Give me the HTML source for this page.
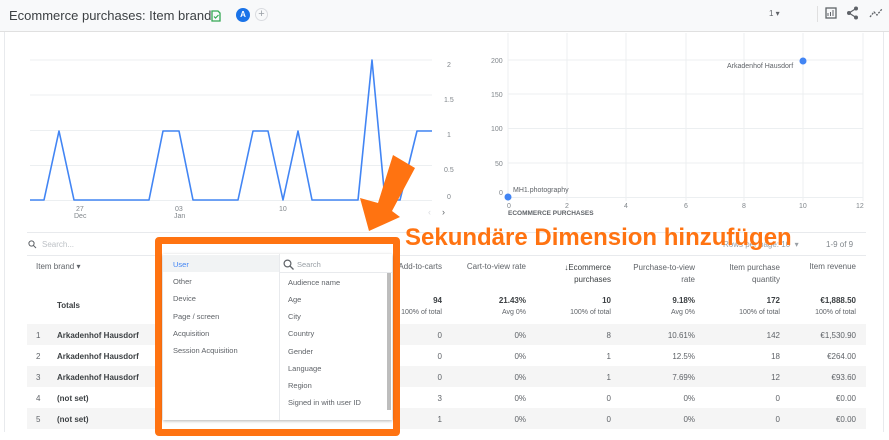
<!DOCTYPE html>
<html><head><meta charset="utf-8"><style>
*{margin:0;padding:0;box-sizing:border-box}
body{width:889px;height:440px;overflow:hidden;background:#fff;font-family:"Liberation Sans",Arial,sans-serif;position:relative;color:#3c4043}
.a{position:absolute;white-space:nowrap}
.hdr{position:absolute;left:0;top:0;width:889px;height:32px;background:#f8f9fa;border-bottom:1px solid #e0e0e0}
.s{font-size:8px;color:#5f6368}
.r{text-align:right}
.row{position:absolute;left:27px;width:839px;height:21px}
.c{position:absolute;font-size:8px;color:#5f6368;text-align:right;top:7px}
.b{font-size:8px;font-weight:bold;color:#3c4043}
.mi{position:absolute;font-size:7.5px;color:#5f6368}
</style></head><body>
<div class="hdr"></div>
<div class="a" style="left:9px;top:8px;font-size:13px;color:#3c4043">Ecommerce purchases: Item brand</div>
<svg class="a" style="left:211px;top:10px" width="10" height="12" viewBox="0 0 10 12"><path d="M1 1h6l2 2v8H1z" fill="none" stroke="#34a853" stroke-width="1.3"/><path d="M3 6.5l1.5 1.5 3-3" fill="none" stroke="#34a853" stroke-width="1.2"/></svg>
<div class="a" style="left:236px;top:8px;width:14px;height:14px;border-radius:50%;background:#1a73e8;color:#fff;font-size:8px;font-weight:bold;text-align:center;line-height:14px">A</div>
<div class="a" style="left:255px;top:8px;width:13px;height:13px;border-radius:50%;border:1px solid #dadce0;color:#9aa0a6;font-size:11px;text-align:center;line-height:11px">+</div>
<div class="a s" style="left:769px;top:9px">1 ▾</div>
<div class="a" style="left:817px;top:6px;width:1px;height:16px;background:#e0e0e0"></div>
<svg class="a" style="left:825px;top:7px" width="12" height="12"><rect x="1" y="1" width="10" height="10" fill="none" stroke="#5f6368" stroke-width="1.3"/><path d="M3 9V6M5.5 9V5M8 9V3" stroke="#5f6368"/></svg>
<svg class="a" style="left:846px;top:6px" width="13" height="14"><circle cx="10" cy="2.5" r="2" fill="#5f6368"/><circle cx="3" cy="7" r="2" fill="#5f6368"/><circle cx="10" cy="11.5" r="2" fill="#5f6368"/><path d="M10 2.5L3 7l7 4.5" stroke="#5f6368" fill="none" stroke-width="1.2"/></svg>
<svg class="a" style="left:869px;top:7px" width="14" height="12"><path d="M1 10l4-5 3 3 5-6" stroke="#5f6368" fill="none" stroke-width="1.3" stroke-dasharray="2 1.2"/></svg>
<div class="a" style="left:4px;top:32px;width:1px;height:400px;background:#e8eaed"></div>
<div class="a" style="left:883px;top:32px;width:1px;height:400px;background:#e8eaed"></div>

<svg class="a" style="left:0;top:32px" width="889" height="190" viewBox="0 32 889 190">
<g stroke="#eceff1" stroke-width="1">
<path d="M30 60H432M30 95H432M30 130.5H432M30 165.5H432M30 200.5H432"/>
<path d="M508 33V201M567 33V201M626 33V201M686 33V201M744 33V201M803 33V201M863 33V201"/>
<path d="M508 60H863M508 94H863M508 128.5H863M508 163H863M508 197.5H863"/>
</g>
<path d="M30 200H44L59 131L74 200H149L163 131H179L193 200H238L253 131H268L283 200L298 131L312 200H358L372 60L385 200H400L417 131H432" fill="none" stroke="#4285f4" stroke-width="1.6" stroke-linejoin="round"/>
<g font-family="Liberation Sans,Arial" font-size="7" fill="#80868b">
<text x="447" y="67">2</text><text x="444" y="102">1.5</text><text x="447" y="137">1</text><text x="444" y="172">0.5</text><text x="447" y="199">0</text>
<text x="76" y="211">27</text><text x="74" y="218">Dec</text><text x="175" y="211">03</text><text x="174" y="218">Jan</text><text x="279" y="211">10</text>
<text x="491" y="63">200</text><text x="491" y="97">150</text><text x="491" y="131">100</text><text x="495" y="166">50</text><text x="499" y="195">0</text>
<text x="507" y="208">0</text><text x="565" y="208">2</text><text x="624" y="208">4</text><text x="684" y="208">6</text><text x="742" y="208">8</text><text x="799" y="208">10</text><text x="856" y="208">12</text>
<text x="727" y="68" fill="#5f6368">Arkadenhof Hausdorf</text><text x="513" y="192" fill="#5f6368">MH1.photography</text>
<text x="508" y="215" font-size="6.5" font-weight="bold" fill="#5f6368">ECOMMERCE PURCHASES</text>
</g>
<text x="428" y="215" font-size="9" fill="#dadce0">‹</text><text x="442" y="215" font-size="9" fill="#5f6368">›</text>
<circle cx="803" cy="61" r="3.5" fill="#4285f4"/><circle cx="508" cy="197" r="3.5" fill="#4285f4"/>
</svg>

<div class="a" style="left:27px;top:232px;width:839px;height:1px;background:#e8eaed"></div>
<div class="a" style="left:27px;top:255px;width:839px;height:1px;background:#e8eaed"></div>
<svg class="a" style="left:28px;top:240px" width="9" height="9"><circle cx="3.5" cy="3.5" r="2.6" fill="none" stroke="#5f6368"/><path d="M5.5 5.5L8 8" stroke="#5f6368"/></svg>
<div class="a s" style="left:42px;top:240px;color:#bdc1c6">Search...</div>
<div class="a s" style="left:723px;top:240px;color:#9aa0a6">Rows per page: 10 &nbsp;▾</div>
<div class="a s" style="left:826px;top:240px;color:#80868b">1-9 of 9</div>
<div class="a s" style="left:36px;top:262px">Item brand ▾</div>
<div class="a s r" style="left:380px;width:62px;top:262px">Add-to-carts</div>
<div class="a s r" style="left:440px;width:86px;top:262px">Cart-to-view rate</div>
<div class="a s r" style="left:530px;width:81px;top:262px;line-height:12px;color:#3c4043">↓Ecommerce<br>purchases</div>
<div class="a s r" style="left:615px;width:80px;top:262px;line-height:12px">Purchase-to-view<br>rate</div>
<div class="a s r" style="left:700px;width:80px;top:262px;line-height:12px">Item purchase<br>quantity</div>
<div class="a s r" style="left:780px;width:76px;top:262px">Item revenue</div>
<div class="a b" style="left:57px;top:301px">Totals</div>
<div class="a b r" style="left:380px;width:62px;top:296px">94</div><div class="a s r" style="left:370px;width:72px;top:309px;font-size:7px">100% of total</div>
<div class="a b r" style="left:440px;width:86px;top:296px">21.43%</div><div class="a s r" style="left:440px;width:86px;top:309px;font-size:7px">Avg 0%</div>
<div class="a b r" style="left:530px;width:81px;top:296px">10</div><div class="a s r" style="left:530px;width:81px;top:309px;font-size:7px">100% of total</div>
<div class="a b r" style="left:615px;width:80px;top:296px">9.18%</div><div class="a s r" style="left:615px;width:80px;top:309px;font-size:7px">Avg 0%</div>
<div class="a b r" style="left:700px;width:80px;top:296px">172</div><div class="a s r" style="left:700px;width:80px;top:309px;font-size:7px">100% of total</div>
<div class="a b r" style="left:780px;width:76px;top:296px">€1,888.50</div><div class="a s r" style="left:780px;width:76px;top:309px;font-size:7px">100% of total</div>

<div class="row" style="top:324px;background:#f5f5f5"><span class="a s" style="left:9px;top:7px">1</span><span class="a b" style="left:30px;top:7px">Arkadenhof Hausdorf</span><span class="c" style="right:424px">0</span><span class="c" style="right:340px">0%</span><span class="c" style="right:255px">8</span><span class="c" style="right:171px">10.61%</span><span class="c" style="right:86px">142</span><span class="c" style="right:10px">€1,530.90</span></div>
<div class="row" style="top:345px"><span class="a s" style="left:9px;top:7px">2</span><span class="a b" style="left:30px;top:7px">Arkadenhof Hausdorf</span><span class="c" style="right:424px">0</span><span class="c" style="right:340px">0%</span><span class="c" style="right:255px">1</span><span class="c" style="right:171px">12.5%</span><span class="c" style="right:86px">18</span><span class="c" style="right:10px">€264.00</span></div>
<div class="row" style="top:366px;background:#f5f5f5"><span class="a s" style="left:9px;top:7px">3</span><span class="a b" style="left:30px;top:7px">Arkadenhof Hausdorf</span><span class="c" style="right:424px">0</span><span class="c" style="right:340px">0%</span><span class="c" style="right:255px">1</span><span class="c" style="right:171px">7.69%</span><span class="c" style="right:86px">12</span><span class="c" style="right:10px">€93.60</span></div>
<div class="row" style="top:387px"><span class="a s" style="left:9px;top:7px">4</span><span class="a b" style="left:30px;top:7px">(not set)</span><span class="c" style="right:424px">3</span><span class="c" style="right:340px">0%</span><span class="c" style="right:255px">0</span><span class="c" style="right:171px">0%</span><span class="c" style="right:86px">0</span><span class="c" style="right:10px">€0.00</span></div>
<div class="row" style="top:408px;background:#f5f5f5"><span class="a s" style="left:9px;top:7px">5</span><span class="a b" style="left:30px;top:7px">(not set)</span><span class="c" style="right:424px">1</span><span class="c" style="right:340px">0%</span><span class="c" style="right:255px">0</span><span class="c" style="right:171px">0%</span><span class="c" style="right:86px">0</span><span class="c" style="right:10px">€0.00</span></div>

<div class="a" style="left:155px;top:237px;width:245px;height:199px;border:7px solid #ff7311;border-radius:4px;background:#fff"></div>
<div class="a" style="left:163px;top:254px;width:229px;height:166px;background:#fff;box-shadow:0 1px 3px rgba(0,0,0,.3)"></div>
<div class="a" style="left:163px;top:255px;width:116px;height:17px;background:#f1f3f4"></div>
<div class="a" style="left:279px;top:254px;width:1px;height:166px;background:#e8eaed"></div>
<div class="a" style="left:280px;top:272px;width:112px;height:1px;background:#e8eaed"></div>
<div class="a" style="left:387px;top:273px;width:4px;height:137px;background:#bdbdbd"></div>
<div class="mi" style="left:173px;top:260px;color:#4285f4">User</div>
<div class="mi" style="left:173px;top:277px">Other</div>
<div class="mi" style="left:173px;top:294px">Device</div>
<div class="mi" style="left:173px;top:312px">Page / screen</div>
<div class="mi" style="left:173px;top:329px">Acquisition</div>
<div class="mi" style="left:173px;top:346px">Session Acquisition</div>
<svg class="a" style="left:283px;top:259px" width="11" height="11"><circle cx="4.5" cy="4.5" r="3.4" fill="none" stroke="#5f6368" stroke-width="1.2"/><path d="M7 7l3.5 3.5" stroke="#5f6368" stroke-width="1.3"/></svg>
<div class="mi" style="left:297px;top:260px;color:#9aa0a6">Search</div>
<div class="mi" style="left:288px;top:278px">Audience name</div>
<div class="mi" style="left:288px;top:295px">Age</div>
<div class="mi" style="left:288px;top:312px">City</div>
<div class="mi" style="left:288px;top:329px">Country</div>
<div class="mi" style="left:288px;top:347px">Gender</div>
<div class="mi" style="left:288px;top:364px">Language</div>
<div class="mi" style="left:288px;top:381px">Region</div>
<div class="mi" style="left:288px;top:398px">Signed in with user ID</div>

<svg class="a" style="left:0;top:0" width="889" height="440"><polygon points="393,155 415,168 392,211 400,217 369,231 360,198 378,203" fill="#ff7311"/></svg>
<div class="a" style="left:405px;top:224px;font-size:24px;font-weight:bold;color:#ff7311">Sekundäre Dimension hinzufügen</div>
</body></html>
